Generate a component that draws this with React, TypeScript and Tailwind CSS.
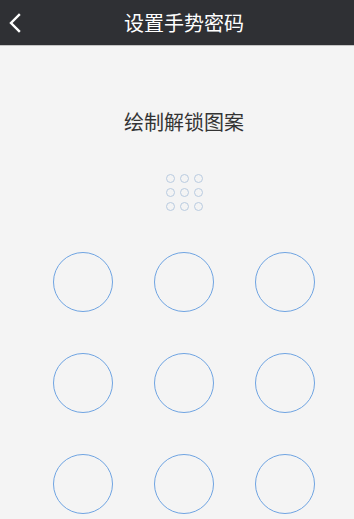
import React from "react";

export default function App() {
  const big = Array.from({ length: 9 });
  const small = Array.from({ length: 9 });
  return (
    <div
      className="w-[354px] h-[519px] overflow-hidden bg-[#f4f4f4] flex flex-col"
      style={{ fontFamily: '"Noto Sans CJK SC", "Noto Sans", sans-serif' }}
    >
      <div className="h-[46px] bg-[#2f3034] border-b border-[#c4c4c4] flex items-center relative shrink-0">
        <svg className="absolute left-[8px] top-[13px]" width="14" height="20" viewBox="0 0 14 20">
          <path d="M11 2 L3 10 L11 18" fill="none" stroke="#ffffff" strokeWidth="2.4" strokeLinecap="square" />
        </svg>
        <div className="flex-1 pl-[14px] text-center text-white text-[20px] leading-none">设置手势密码</div>
      </div>
      <div className="flex-1 flex flex-col items-center pl-[14px]">
        <div className="mt-[66px] text-[20px] leading-none text-[#333333]">绘制解锁图案</div>
        <div className="mt-[42px] grid grid-cols-3 gap-[5px]">
          {small.map((_, i) => (
            <div key={i} className="w-[9px] h-[9px] rounded-full border border-[#b9cbe0]" />
          ))}
        </div>
        <div className="mt-[41px] grid grid-cols-3 gap-x-[41px] gap-y-[41px]">
          {big.map((_, i) => (
            <div key={i} className="w-[60px] h-[60px] rounded-full border-[1.5px] border-[#6fa4e2]" />
          ))}
        </div>
      </div>
    </div>
  );
}
